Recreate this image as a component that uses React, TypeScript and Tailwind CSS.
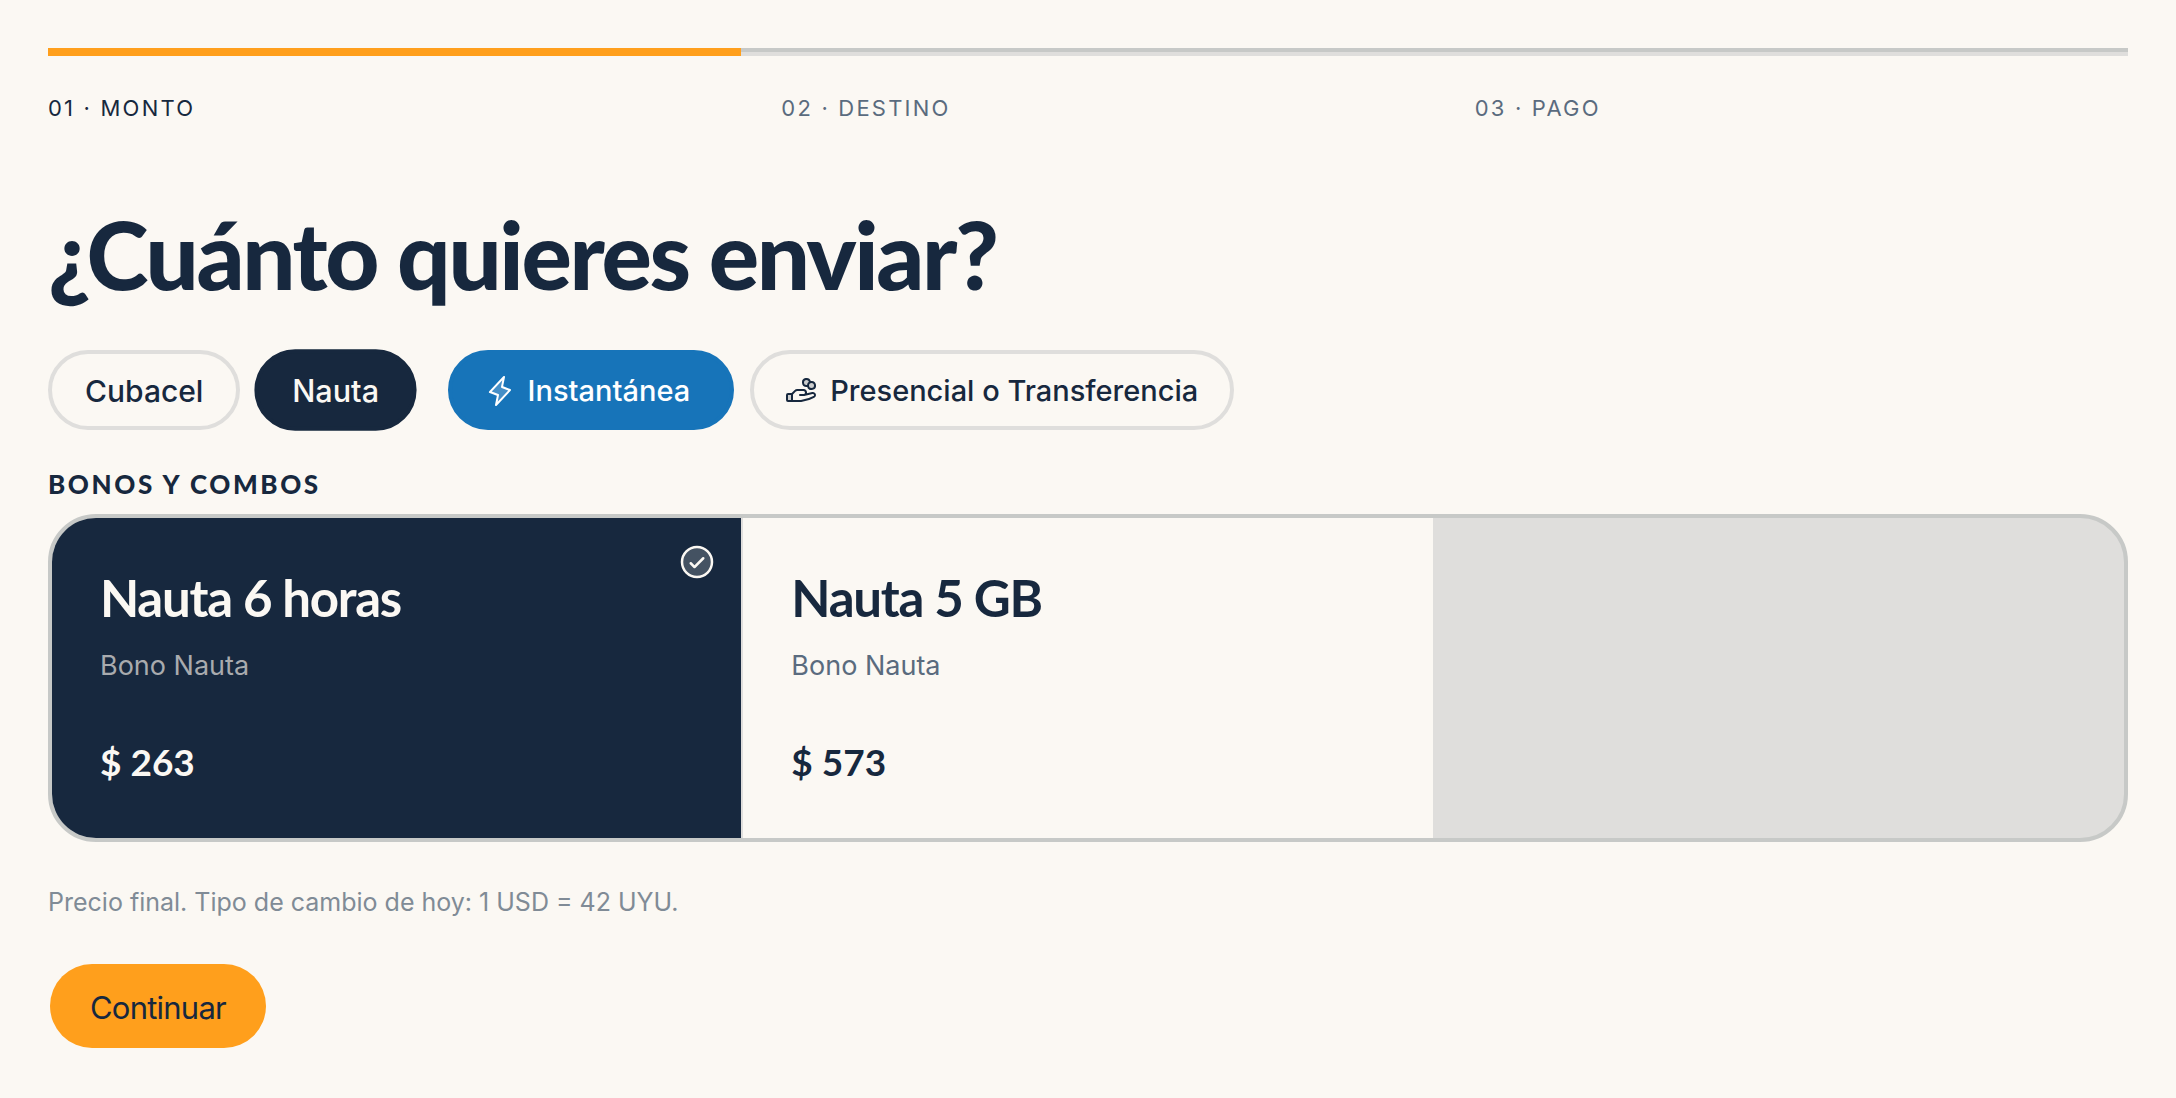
import { useState } from "react"
import clsx from "clsx"
import { PiCheckCircleDuotone, PiHandCoinsDuotone, PiLightningDuotone } from "react-icons/pi"

const STEPS = ["01 · MONTO", "02 · DESTINO", "03 · PAGO"]

const SERVICES = ["Cubacel", "Nauta"]

const METHODS = [
  { label: "Instantánea", Icon: PiLightningDuotone },
  { label: "Presencial o Transferencia", Icon: PiHandCoinsDuotone },
]

const OFFERS = [
  { name: "Nauta 6 horas", kind: "Bono Nauta", price: "$ 263" },
  { name: "Nauta 5 GB", kind: "Bono Nauta", price: "$ 573" },
]

const PILL = "flex h-20 items-center whitespace-nowrap rounded-full border-4 pt-0.5 font-medium"

function Steps() {
  return (
    <ol className="grid grid-cols-3">
      {STEPS.map((step, i) => (
        <li key={step}>
          <div
            className={clsx(
              "h-2 border-t-4",
              i === 0 ? "border-[#ff9f1c] bg-[#ff9f1c]" : "border-[#c7c9c7] bg-[#dfdedc]"
            )}
          />
          <p
            className={clsx(
              "mt-9 text-[22px] leading-8 tracking-widest",
              i === 0 ? "text-[#17283e]" : "pl-10 text-[#5a6b7e]"
            )}
          >
            {step}
          </p>
        </li>
      ))}
    </ol>
  )
}

export default function App() {
  const [service, setService] = useState("Nauta")
  const [method, setMethod] = useState("Instantánea")
  const [offer, setOffer] = useState("Nauta 6 horas")

  return (
    <main className="min-h-screen bg-[#fbf8f3] px-12 py-12 font-['Inter',sans-serif] text-[#17283e]">
      <Steps />

      <h1 className="mt-[82px] font-['Lato',sans-serif] text-[94px] leading-[96px] font-black tracking-tight">
        ¿Cuánto quieres enviar?
      </h1>

      <div className="mt-12 flex flex-wrap items-center gap-8">
        <div className="flex gap-4">
          {SERVICES.map((name) => (
            <button
              key={name}
              type="button"
              aria-pressed={service === name}
              onClick={() => setService(name)}
              className={clsx(
                PILL,
                "px-[33px] text-[30px]",
                service === name
                  ? "scale-102 border-[#17283e] bg-[#17283e] text-[#fbf8f3]"
                  : "border-[#dfdedc]"
              )}
            >
              {name}
            </button>
          ))}
        </div>

        <div className="flex gap-4">
          {METHODS.map(({ label, Icon }) => (
            <button
              key={label}
              type="button"
              aria-pressed={method === label}
              onClick={() => setMethod(label)}
              className={clsx(
                PILL,
                "gap-3 pl-8 text-[29px]",
                method === label
                  ? "border-[#1774b9] bg-[#1774b9] pr-10 text-white"
                  : "border-[#dfdedc] pr-8"
              )}
            >
              <Icon className="size-8" />
              {label}
            </button>
          ))}
        </div>
      </div>

      <h2 className="mt-[38px] font-['Lato',sans-serif] text-[26px] leading-8 font-black tracking-widest">
        BONOS Y COMBOS
      </h2>

      {/* Ofertas */}
      <div className="mt-3.5 grid grid-cols-3 gap-0.5 overflow-hidden rounded-[48px] border-4 border-[#c7c9c7] bg-[#dfdedc]">
        {OFFERS.map(({ name, kind, price }) => {
          const selected = offer === name
          return (
            <button
              key={name}
              type="button"
              aria-pressed={selected}
              onClick={() => setOffer(name)}
              className={clsx(
                "relative px-12 pt-12 pb-[52px] text-left",
                selected ? "bg-[#17283e] text-[#fbf8f3]" : "bg-[#fbf8f3]"
              )}
            >
              {selected && <PiCheckCircleDuotone className="absolute top-6 right-6 size-10" />}
              <span className="block font-['Lato',sans-serif] text-[51px] leading-[64px] font-bold tracking-tight">
                {name}
              </span>
              <span
                className={clsx(
                  "mt-[18px] block text-[27px] leading-9",
                  selected ? "text-[#a9abae]" : "text-[#5a6b7e]"
                )}
              >
                {kind}
              </span>
              <span className="mt-[54px] block font-['Lato',sans-serif] text-[37px] leading-[48px] font-bold">
                {price}
              </span>
            </button>
          )
        })}
      </div>

      <p className="mt-[42px] text-[25px] leading-9 text-[#808b96]">
        Precio final. Tipo de cambio de hoy: 1 USD = 42 UYU.
      </p>

      <button
        type="button"
        className="mt-11 ml-0.5 h-[84px] rounded-full bg-[#ff9f1c] px-10 pt-1 text-[31px] tracking-tight"
      >
        Continuar
      </button>
    </main>
  )
}
